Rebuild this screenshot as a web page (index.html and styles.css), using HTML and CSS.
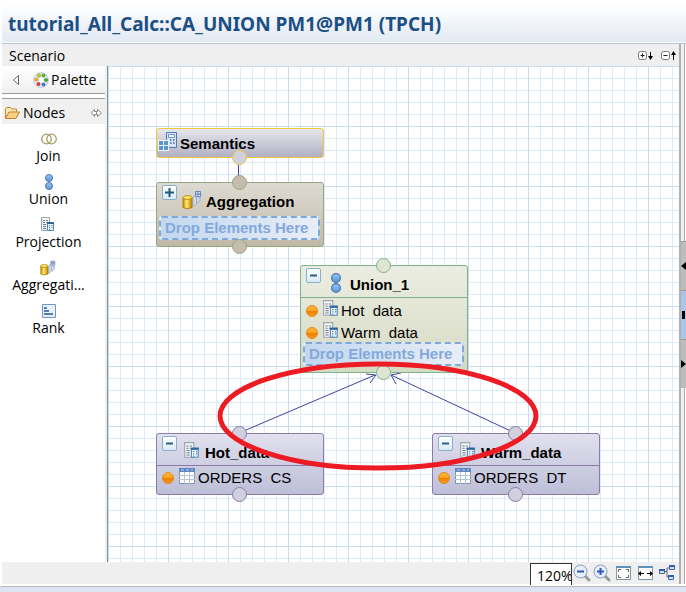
FILE: index.html
```html
<!DOCTYPE html>
<html lang="en">
<head>
<meta charset="utf-8">
<title>tutorial_All_Calc::CA_UNION PM1@PM1 (TPCH)</title>
<link rel="stylesheet" href="styles.css">
</head>
<body>
<svg class="defs" aria-hidden="true">
  <defs>
    <linearGradient id="gold" x1="0" x2="1" y1="0" y2="0"><stop offset="0" stop-color="#b98a00"/><stop offset=".4" stop-color="#ffe873"/><stop offset="1" stop-color="#b98200"/></linearGradient>
    <linearGradient id="blue" x1="0" x2="0" y1="0" y2="1"><stop offset="0" stop-color="#9cc6f0"/><stop offset="1" stop-color="#5b93d6"/></linearGradient>
    <linearGradient id="orange" x1="0" x2="0" y1="0" y2="1"><stop offset="0" stop-color="#ffb63c"/><stop offset=".5" stop-color="#ffa01c"/><stop offset=".55" stop-color="#ee7f00"/><stop offset="1" stop-color="#ff9d2a"/></linearGradient>
    <symbol id="i-join" viewBox="0 0 16 16"><g fill="none" stroke="#a99a68" stroke-width="1.3"><circle cx="5.500" cy="8" r="4.800"/><circle cx="10.500" cy="8" r="4.800"/></g></symbol>
    <symbol id="i-union" viewBox="0 0 16 16"><g fill="url(#blue)" stroke="#4679b5"><circle cx="8" cy="4" r="3.500"/><circle cx="8" cy="12" r="3.500"/></g></symbol>
    <symbol id="i-proj" viewBox="0 0 16 16"><path d="M1.500.5h8v13h-8z" fill="#f5f7f8" stroke="#9aa5ad"/><path d="M3 3.500h2M6 3.500h2M3 5.500h2M6 5.500h1M3 7.500h3M3 9.500h3M3 11.500h3" stroke="#6c7b88"/><path d="M7.500 5.500h6v8h-6z" fill="#e8f3fd" stroke="#5b87b0"/><path d="M7 6h7" stroke="#2b679f" stroke-width="2"/><path d="M9 8.500h1M11.500 8.500h1M9 10.500h1M11.500 10.500h1M9 12.500h1" stroke="#4b87bd"/></symbol>
    <symbol id="i-agg" viewBox="0 0 20 20"><path d="M11 7l5-4v9l-5 5z" fill="#cfdcef" stroke="#a0b3d2"/><path d="M13.500 1.500h5v5h-5z" fill="#eaf1fb" stroke="#6587bd"/><path d="M15 3h2v2h-2z" fill="#fff" stroke="#4672b3"/><path d="M14.500 7v7l3.500-3.500V7z" fill="#cfdcef" stroke="#93a9cd"/><path d="M1 7.500v10q4.500 2.500 9 0v-10z" fill="url(#gold)" stroke="#b58100"/><ellipse cx="5.500" cy="7.500" rx="4.500" ry="1.800" fill="#ffe874" stroke="#bd8d08"/></symbol>
    <symbol id="i-rank" viewBox="0 0 16 16"><path d="M1.500 1.500h13v13h-13z" fill="#e8f1fb" stroke="#6f94c4"/><path d="M3 5h3M3 8h5M3 11h9" stroke="#28579a" stroke-width="1.500"/></symbol>
    <symbol id="i-table" viewBox="0 0 16 16"><path d="M.5.5h15v15H.5z" fill="#fff" stroke="#7c92b5"/><path d="M0 0h16v4H0z" fill="#5f86c1"/><path d="M2 2h3M7 2h3M12 2h2" stroke="#b7d0f1"/><path d="M5.500 4v12M10.500 4v12M0 7.500h16M0 11.500h16" stroke="#b4c4d9"/></symbol>
    <symbol id="i-sem" viewBox="0 0 20 20"><path d="M8.500 1.500h10v15h-10z" fill="#d7e4f5" stroke="#5378b5"/><path d="M10.500 3.500h6v3h-6z" fill="#f4faff" stroke="#6b94cc"/><path d="M12 9h1.500M15 9h1.500M12 12h1.500M15 12h1.500" stroke="#6388bd" stroke-width="2"/><path d="M0 9h11v11H0z" fill="#f1f7fd"/><path d="M1 10h4v4H1zM6 10h4v4H6zM1 15h4v4H1zM6 15h4v4H6z" fill="#5798cf"/></symbol>
    <symbol id="i-dot" viewBox="0 0 12 12"><circle cx="6" cy="6" r="5.500" fill="url(#orange)" stroke="#dc8a27"/></symbol>
    <symbol id="i-minus" viewBox="0 0 13 13"><path d="M3 6.500h7" stroke="#2b5f86" stroke-width="2"/></symbol>
    <symbol id="i-plus" viewBox="0 0 13 13"><path d="M2 6.500h9M6.500 2v9" stroke="#1f587f" stroke-width="2"/></symbol>
  </defs>
</svg>

<header class="title"><h1>tutorial_All_Calc::CA_UNION PM1@PM1 (TPCH)</h1></header>

<div class="workspace">
  <main class="editor">
    <div class="scenario">
      <h2>Scenario</h2>
      <div class="scenario-tools">
        <button aria-label="Expand all"><svg viewBox="0 0 16 12"><rect x=".5" y="1.500" width="8" height="8" rx="2" fill="#fff" stroke="#777"/><path d="M2.500 5.500h4M4.500 3.500v4" stroke="#222"/><path d="M12.500 2v7" stroke="#000"/><path d="M10 6h5l-2.500 4z"/></svg></button>
        <button aria-label="Collapse all"><svg viewBox="0 0 16 12"><rect x=".5" y="1.500" width="8" height="8" rx="2" fill="#fff" stroke="#777"/><path d="M2.500 5.500h4" stroke="#222"/><path d="M12.500 3v7" stroke="#000"/><path d="M10 5h5l-2.500-4z"/></svg></button>
      </div>
    </div>

    <div class="body">
      <aside class="palette">
        <div class="palette-head">
          <button aria-label="Hide palette"><svg class="tri" viewBox="0 0 8 12"><path d="M6.500 1.500v9L1.500 6z" fill="#fff" stroke="#666"/></svg></button>
          <svg class="ico16" viewBox="0 0 16 16"><circle cx="8" cy="8" r="7.300" fill="#e8edf8" stroke="#bcc8e0"/><circle cx="8" cy="8" r="2.500" fill="#fff"/><circle cx="6" cy="3.500" r="1.600" fill="#c8d400" stroke="#7b9500" stroke-width=".6"/><circle cx="10.500" cy="3.500" r="1.600" fill="#5fbd23" stroke="#377d10" stroke-width=".6"/><circle cx="3.500" cy="7.500" r="1.600" fill="#ffb61a" stroke="#cb7600" stroke-width=".6"/><circle cx="13" cy="8" r="1.600" fill="#48b82b" stroke="#287b17" stroke-width=".6"/><circle cx="5.500" cy="12" r="1.600" fill="#ed3f34" stroke="#9f1710" stroke-width=".6"/><circle cx="10.500" cy="12.500" r="1.600" fill="#4a77df" stroke="#204aa3" stroke-width=".6"/></svg>
          <span>Palette</span>
        </div>
        <div class="drawer">
          <svg class="ico16" viewBox="0 0 16 16"><path d="M1.500 13V4l1-1.500h4L8 4h4.500v3" fill="#fbe6b5" stroke="#c38b3b"/><path d="M1.500 13.500L5 7h10.500l-3.500 6.500z" fill="#f9d184" stroke="#bf8230"/></svg>
          <span>Nodes</span>
          <button class="pin" aria-label="Pin open"><svg viewBox="0 0 11 8"><path d="M3.500.5L.5 4l3 3.500V5.500h3v2l4-3.500-4-3.500v2h-3z" fill="#fff" stroke="#888"/><path d="M5.500 2.500v3" stroke="#888"/></svg></button>
        </div>
        <div class="tools">
          <button class="tool"><svg class="ico16"><use href="#i-join"/></svg>Join</button>
          <button class="tool"><svg class="ico16"><use href="#i-union"/></svg>Union</button>
          <button class="tool"><svg class="ico16"><use href="#i-proj"/></svg>Projection</button>
          <button class="tool"><svg class="ico16"><use href="#i-agg"/></svg>Aggregati...</button>
          <button class="tool"><svg class="ico16"><use href="#i-rank"/></svg>Rank</button>
        </div>
      </aside>

      <section class="canvas" aria-label="Scenario diagram">
        <svg class="links" aria-hidden="true"><g fill="none" stroke="#4442a0"><path d="M130.500 92v24M131 367L267 309M407 367L283 309"/><path d="M258 308l10 1-6 8M293 307l-10 2 5 9"/></g></svg>

        <article class="node semantics">
          <div class="node-head"><svg class="ico20"><use href="#i-sem"/></svg><h3>Semantics</h3></div>
          <i class="port bottom"></i>
        </article>

        <article class="node aggregation">
          <i class="port top"></i>
          <div class="node-head"><button class="toggle" aria-label="Expand"><svg><use href="#i-plus"/></svg></button><svg class="ico20"><use href="#i-agg"/></svg><h3>Aggregation</h3></div>
          <div class="drop">Drop Elements Here</div>
          <i class="port bottom"></i>
        </article>

        <article class="node union">
          <i class="port top"></i>
          <div class="node-head ruled"><button class="toggle" aria-label="Collapse"><svg><use href="#i-minus"/></svg></button><svg class="ico20"><use href="#i-union"/></svg><h3>Union_1</h3></div>
          <ul>
            <li><svg class="dot"><use href="#i-dot"/></svg><svg class="ico18"><use href="#i-proj"/></svg><span>Hot&nbsp; data</span></li>
            <li><svg class="dot"><use href="#i-dot"/></svg><svg class="ico18"><use href="#i-proj"/></svg><span>Warm&nbsp; data</span></li>
          </ul>
          <div class="drop">Drop Elements Here</div>
          <i class="port bottom"></i>
        </article>

        <article class="node data hot">
          <i class="port top"></i>
          <div class="node-head ruled"><button class="toggle" aria-label="Collapse"><svg><use href="#i-minus"/></svg></button><svg class="ico18"><use href="#i-proj"/></svg><h3>Hot_data</h3></div>
          <ul><li><svg class="dot"><use href="#i-dot"/></svg><svg class="ico16"><use href="#i-table"/></svg><span>ORDERS&nbsp; CS</span></li></ul>
          <i class="port bottom"></i>
        </article>

        <article class="node data warm">
          <i class="port top"></i>
          <div class="node-head ruled"><button class="toggle" aria-label="Collapse"><svg><use href="#i-minus"/></svg></button><svg class="ico18"><use href="#i-proj"/></svg><h3>Warm_data</h3></div>
          <ul><li><svg class="dot"><use href="#i-dot"/></svg><svg class="ico16"><use href="#i-table"/></svg><span>ORDERS&nbsp; DT</span></li></ul>
          <i class="port bottom"></i>
        </article>

        <svg class="links" aria-hidden="true"><ellipse cx="270" cy="350" rx="158" ry="52" fill="none" stroke="#ed1c24" stroke-width="5"/></svg>
      </section>
    </div>

    <footer class="zoombar">
      <input type="text" value="120%" aria-label="Zoom level">
      <button aria-label="Zoom out"><svg viewBox="0 0 18 18"><path d="M12 12l4 4" stroke="#999" stroke-width="3" stroke-linecap="round"/><circle cx="7.500" cy="7.500" r="6.500" fill="#e5efff" stroke="#8d9db8"/><path d="M4 7.500h7" stroke="#3157b7" stroke-width="2"/></svg></button>
      <button aria-label="Zoom in"><svg viewBox="0 0 18 18"><path d="M12 12l4 4" stroke="#999" stroke-width="3" stroke-linecap="round"/><circle cx="7.500" cy="7.500" r="6.500" fill="#e5efff" stroke="#8d9db8"/><path d="M4 7.500h7M7.500 4v7" stroke="#3157b7" stroke-width="2"/></svg></button>
      <button aria-label="Fit page"><svg viewBox="0 0 18 18"><path d="M1.500 2.500h14v13h-14z" fill="#fcfdf8" stroke="#8496a5"/><path d="M1 3h15" stroke="#5b91bb" stroke-width="2"/><path d="M3.500 8V5.500H6M11 5.500h2.500V8M13.500 11v2.500H11M6 13.500H3.500V11" fill="none" stroke="#666"/></svg></button>
      <button aria-label="Fit width"><svg viewBox="0 0 18 18"><path d="M1.500 2.500h14v13h-14z" fill="#fcfdf8" stroke="#8496a5"/><path d="M1 3h15" stroke="#5b91bb" stroke-width="2"/><path d="M3 9.500h4M10 9.500h4" stroke="#000"/><path d="M1 9.500L4 7v5zM16 9.500L13 7v5z"/></svg></button>
      <button aria-label="Auto layout"><svg viewBox="0 0 18 18"><path d="M5 7.500h3V4h3M8 7v6h3" fill="none" stroke="#666"/><g fill="#cfe0fb" stroke="#4265ac"><path d="M.5 5.500h5v4h-5zM10.500 1.500h5v4h-5zM9.500 11.500h5v4h-5z"/></g><path d="M0 6h6M10 2h6M9 12h6" stroke="#315dae" stroke-width="2"/></svg></button>
    </footer>
  </main>

  <div class="sash">
    <button class="sash-btn" aria-label="Move left"><svg viewBox="0 0 5 8"><path d="M5 0v8L0 4z"/></svg></button>
    <button class="sash-btn mid" aria-label="Restore"><svg viewBox="0 0 5 8"><path d="M1 0h3v8H1z"/></svg></button>
    <button class="sash-btn" aria-label="Move right"><svg viewBox="0 0 5 8"><path d="M0 0v8l5-4z"/></svg></button>
  </div>
</div>
<div class="frame"></div>
</body>
</html>
```
FILE: styles.css
```css
* { box-sizing: border-box; }
html, body { height: 100%; }
body {
  margin: 0;
  display: flex;
  flex-direction: column;
  background: #fff;
  color: #000;
  font: 14px/18px "Open Sans", sans-serif;
  overflow: hidden;
}
h1, h2, h3, ul { margin: 0; padding: 0; font: inherit; list-style: none; }
button { padding: 0; border: 0; background: none; font: inherit; color: inherit; }
svg { display: block; flex: none; }
.defs { position: absolute; width: 0; height: 0; }
.ico16 { width: 16px; height: 16px; }
.ico18 { width: 18px; height: 18px; }
.ico20 { width: 20px; height: 20px; }
.dot { width: 12px; height: 12px; }

.title {
  flex: none;
  height: 42px;
  margin-left: 2px;
  padding: 6px;
  background: linear-gradient(#fff 10%, #e2e9f2);
}
.title h1 { font: 700 19px/36px "Noto Sans", "Open Sans", sans-serif; color: #1b4f86; white-space: nowrap; }

.workspace { flex: 1; min-height: 0; display: flex; margin: 1px 0 2px 2px; border-top: 1px solid #b4c4d4; }
.editor { flex: 1; min-width: 0; display: flex; flex-direction: column; }
.scenario { flex: none; height: 22px; display: flex; align-items: center; justify-content: space-between; padding: 2px 2px 0 7px; background: #efefef; }
.scenario-tools { display: flex; gap: 7px; }
.scenario-tools svg { width: 16px; height: 12px; }

.body { flex: 1; min-height: 0; display: flex; }
.palette { flex: none; width: 106px; border-right: 1px solid #8e8e8e; box-shadow: inset -2px 0 #f0f0f0; padding-right: 2px; }
.palette-head { height: 28px; display: flex; align-items: center; padding: 1px 0 0 10px; border-bottom: 1px solid #999; background: linear-gradient(#fff, #f0f0f0); }
.palette-head .ico16 { margin: 0 2px 0 13px; }
.tri { width: 8px; height: 12px; }
.drawer { height: 26px; margin-top: 4px; display: flex; align-items: center; gap: 3px; padding: 2px 3px 0 2px; border-top: 1px solid #999; background: #f0f0f0; }
.pin { margin-left: auto; }
.pin svg { width: 11px; height: 8px; }
.tools { display: flex; flex-direction: column; align-items: center; gap: 9px; padding: 7px 10px 0 0; }
.tool { display: flex; flex-direction: column; align-items: center; height: 34px; }

.canvas {
  position: relative;
  flex: 1;
  min-width: 0;
  overflow: hidden;
  background:
    linear-gradient(#c9dcef 1px, transparent 1px) 0 0 / 60px 60px,
    linear-gradient(90deg, #c9dcef 1px, transparent 1px) 0 0 / 60px 60px,
    linear-gradient(#dfeaf8 1px, transparent 1px) 0 0 / 12px 12px,
    linear-gradient(90deg, #dfeaf8 1px, transparent 1px) 0 0 / 12px 12px,
    #fff;
}
.links { position: absolute; inset: 0; width: 100%; height: 100%; pointer-events: none; }

.node {
  position: absolute;
  width: 168px;
  border: 1px solid var(--edge);
  border-radius: 3px;
  background: linear-gradient(var(--from), var(--to));
  font: 15px/22px "Liberation Sans", sans-serif;
}
.semantics { left: 48px; top: 62px; --edge: #f0c83c; --from: #e6e6ec; --to: #b0b0c4; }
.aggregation { left: 48px; top: 116px; --edge: #95a77f; --from: #dedad3; --to: #c2b8a8; }
.union { left: 192px; top: 199px; --edge: #7fb28f; --from: #ecede2; --to: #d5dac2; }
.data { top: 367px; --edge: #8b7baa; --from: #e0e0ee; --to: #bebed8; }
.hot { left: 48px; }
.warm { left: 324px; }

.node-head { display: flex; align-items: center; gap: 4px; height: 32px; padding: 4px 5px 0; }
.node-head.ruled { border-bottom: 1px solid var(--edge); }
.node-head h3 { font-weight: 700; padding-top: 2px; }
.toggle + .ico20 { margin: 0 0 2px 1px; }
.toggle + .ico18 { margin: 0 0 2px 2px; }
.semantics .node-head { height: 28px; padding: 0 1px; gap: 2px; }
.semantics .ico20 { margin-bottom: 4px; }
.toggle { align-self: flex-start; width: 15px; height: 15px; margin-top: -2px; border: 1px solid #8ab0cc; border-radius: 2px; background: linear-gradient(#fff, #d8eaf6); }
.toggle svg { width: 13px; height: 13px; }

.node ul { padding: 2px 5px; }
.data ul { padding: 1px 5px 5px; }
.node li { display: flex; align-items: center; gap: 1px; height: 22px; }
.node li .ico16, .node li .ico18 { margin: 0 0 4px 4px; }
.node li .ico16 { margin-right: 2px; }
.node li .ico18 { margin: 0 0 4px 3px; }
.drop { height: 24px; margin: 1px 3px 6px 2px; border: 2px dashed #7fa8db; border-radius: 3px; background: linear-gradient(90deg, #c3d7ef, #e8eef6); color: #83a9dc; font-weight: 700; line-height: 20px; padding-left: 4px; white-space: nowrap; }
.union .drop { margin-top: -4px; }

.port { position: absolute; left: 75px; width: 15px; height: 15px; border: 1px solid var(--edge); border-radius: 50%; }
.port.top { top: -8px; }
.port.bottom { bottom: -8px; }
.semantics .port, .data .port { background: #d0d0df; }
.aggregation .port { background: #c5bcae; }
.union .port { background: #dfe5d2; }

.zoombar { flex: none; height: 22px; display: flex; align-items: center; justify-content: flex-end; gap: 4px; padding-right: 2px; background: #efefef; }
.zoombar input { width: 42px; height: 22px; margin: 2px -3px 0 0; padding: 2px 0 0 6px; border: 1px solid #333; border-bottom: 0; border-radius: 0; background: #fff; font: inherit; }
.zoombar svg { width: 18px; height: 18px; }
.zoombar button:nth-of-type(2) { margin-left: -2px; }

.sash { flex: none; width: 7px; display: flex; flex-direction: column; justify-content: center; border-left: 2px solid #b0b0b0; background: linear-gradient(90deg, #f0f0f0 3px, #aaa 3px, #aaa 4px, #fff 4px); }
.sash-btn { width: 5px; height: 49px; background: #bcbcbc; border-top: 1px solid #999; display: flex; align-items: center; justify-content: center; }
.sash-btn.mid { background: #a9c6e8; }
.sash-btn svg { width: 5px; height: 8px; }

.frame { flex: none; height: 6px; border-top: 1px solid #b8b8b8; border-radius: 3px 0 0 0; background: #dee4f4; }
```
